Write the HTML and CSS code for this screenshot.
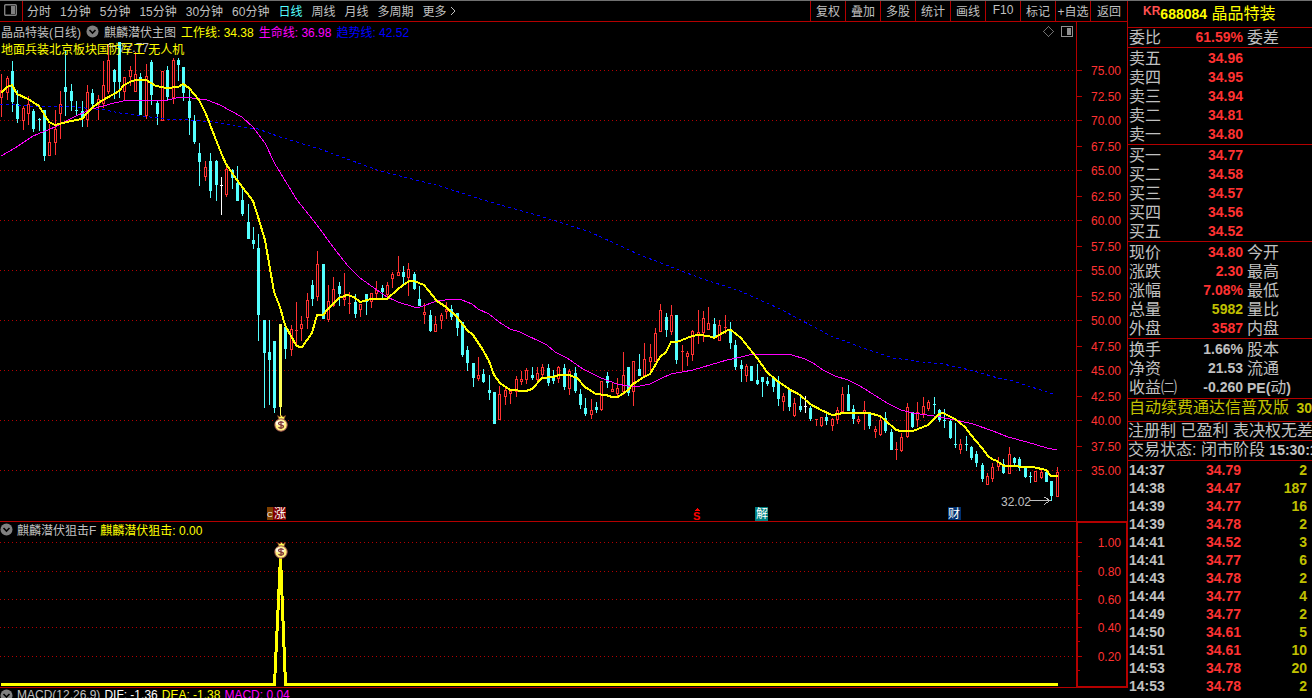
FILE: index.html
```html
<!DOCTYPE html>
<html lang="zh-CN">
<head>
<meta charset="utf-8">
<title>晶品特装 688084</title>
<link rel="stylesheet" href="styles.css">
</head>
<body>
<div class="terminal">
  <main class="charts">
    <header class="toolbar">
      <button class="layout-btn" aria-label="布局">
        <svg width="13" height="12" viewBox="0 0 13 12"><rect x=".7" y=".7" width="11.600" height="10.600" rx="1" fill="none" stroke="#808080" stroke-width="1.400"/><rect x="7" y="2" width="4" height="8" fill="#808080"/></svg>
      </button>
      <nav class="periods">
        <button>分时</button><button>1分钟</button><button>5分钟</button><button>15分钟</button><button>30分钟</button><button>60分钟</button><button class="active">日线</button><button>周线</button><button>月线</button><button>多周期</button><button>更多 <svg width="7" height="10" viewBox="0 0 7 10"><path d="M1 1l4 4-4 4" fill="none" stroke="#c0c0c0"/></svg></button>
      </nav>
      <nav class="tools">
        <button>复权</button><button>叠加</button><button>多股</button><button>统计</button><button>画线</button><button>F10</button><button>标记</button><button>+自选</button><button>返回</button>
      </nav>
    </header>

    <section class="pane">
      <div class="legend">
        <span>晶品特装(日线)</span>
        <svg class="chevron" width="13" height="13" viewBox="0 0 13 13"><circle cx="6.5" cy="6.5" r="6" fill="#808080"/><path d="M3.5 5l3 3 3-3" fill="none" stroke="#000" stroke-width="1.6"/></svg>
        <span>麒麟潜伏主图</span>
        <span class="yellow">工作线: 34.38</span>
        <span class="magenta">生命线: 36.98</span>
        <span class="blue">趋势线: 42.52</span>
      </div>
      <p class="tags">地面兵装北京板块国防军工 无人机</p>
      <svg class="plot" viewBox="0 22 1128 500">
        <g id="priceGrid"></g>
        <path class="frame" d="M1076.5 22V521M1127.5 22V521M0 521.5H1128"/>
        <g class="note">
          <text x="119" y="52">77.77</text>
          <path d="M107 46h9M107 46l4-3"/>
        </g>
        <g id="candles"></g>
        <polyline class="trend" points="0,104 30,106 70,106 85,108 105,110 120,113 150,117 165,119 190,120 215,122 235,126 258,129 280,137 320,149 380,171 440,186 483,200 540,216 590,232 640,255 700,278 740,291 778,308 833,337 842,340 860,347 893,358 923,362 943,364 970,370 998,378 1013,381 1053,394"/>
        <polyline class="life" points="1,156 15,148 33,136 55,127 76,116 92,109 114,103 128,100 168,100 180,97 192,98 207,100 220,105 242,117 253,127 265,143 275,164 297,200 317,225 333,247 348,266 360,278 377,290 387,297 398,302 414,307 420,307 437,301 453,299 462,300 472,304 478,309 489,314 499,322 510,329 520,332 547,345 555,352 567,358 583,369 601,378 617,384 628,386 640,386 650,384 660,379 671,374 693,370 727,360 741,357 753,354 773,354 792,355 805,359 813,363 823,370 835,376 848,380 860,386 868,391 887,403 901,410 913,413 927,415 940,417 960,421 973,424 993,431 1008,437 1027,442 1047,448 1057,450"/>
        <polyline class="work" points="1,93 7,87 12,85 17,94 28,99 39,106 44,114 49,122 55,125 63,123 71,121 82,119 87,113 92,108 98,103 103,100 114,94 119,91 124,85 130,82 135,80 146,80 156,86 167,88 178,87 183,84 189,88 199,100 206,114 216,140 222,155 226,164 237,180 253,201 259,220 265,240 269,263 274,292 280,307 285,325 291,336 296,345 299,347 302,347 312,333 317,315 323,315 328,309 339,298 347,295 354,297 360,302 371,299 387,299 398,289 409,281 414,281 424,285 437,301 446,307 457,317 467,330 473,335 483,350 489,361 494,375 500,383 510,390 526,391 532,389 542,378 553,377 559,375 569,375 577,378 585,387 596,394 606,395 612,397 618,397 628,390 633,384 644,377 650,374 660,357 666,352 671,342 677,342 692,336 698,335 709,336 714,338 719,335 728,330 731,330 741,338 757,358 767,372 776,380 789,389 800,395 810,404 821,410 832,415 839,414 842,413 869,413 880,416 885,420 896,430 901,431 913,431 923,427 928,425 939,414 943,413 955,419 965,427 971,435 982,448 988,456 992,459 997,461 1004,466 1033,467 1046,470 1051,476 1058,476"/>
        <g class="note">
          <text x="1001" y="506">32.02</text>
          <path d="M1030 500.5h20M1044 497l6 3.5-6 4"/>
        </g>
        <g class="marks">
          <rect x="267" y="507" width="6" height="13" fill="#804000"/><text x="267" y="517" class="small">C</text>
          <rect x="273" y="507" width="13" height="13" fill="#800000"/><text x="274" y="518">涨</text>
          <text x="693" y="520" class="s-mark">S</text><path d="M697 508l3 3h-6z" fill="#ff0000"/>
          <rect x="755" y="507" width="13" height="14" fill="#008080"/><text x="756" y="518">解</text>
          <rect x="948" y="507" width="13" height="13" fill="#003070"/><text x="948" y="518">财</text>
        </g>
        <g class="bag" transform="translate(281 425)">
          <path d="M-3.500-9.500l2.500 1.500 1.500-2 1.500 2 2.500-1.500-1.500 4h-5z" fill="#ffff54" stroke="#803020" stroke-width=".7"/>
          <circle r="6.200" fill="#fff080" stroke="#a05050"/><ellipse cx="-1" cy="-2" rx="4.500" ry="2.500" fill="#fffbe0"/>
          <path d="M2.500-2.200c-1.200-1.600-5-1.200-5 .7 0 1.900 5 1.100 5 3 0 1.900-3.800 2.300-5 .7M0-4V4" fill="none" stroke="#803838" stroke-width="1.300"/>
        </g>
        <path d="M1043.500 31.500l5-5 5 5-5 5z" fill="none" stroke="#707070"/>
        <rect x="1061.500" y="26.500" width="11" height="10" rx="1" fill="none" stroke="#909090"/><rect x="1067" y="28" width="4" height="7" fill="#909090"/>
      </svg>
    </section>

    <section class="pane">
      <div class="legend compact">
        <svg class="chevron" width="13" height="13" viewBox="0 0 13 13"><circle cx="6.5" cy="6.5" r="6" fill="#808080"/><path d="M3.500 5l3 3 3-3" fill="none" stroke="#000" stroke-width="1.600"/></svg>
        <span>麒麟潜伏狙击F</span>
        <span class="yellow">麒麟潜伏狙击: 0.00</span>
      </div>
      <svg class="plot" viewBox="0 522 1128 166">
        <g id="signalGrid"></g>
        <path class="frame" d="M0 687.500H1077"/>
        <path d="M1077 522H1127V686.500H1077z" fill="none" stroke="#b40000" stroke-width="2"/>
        <polyline class="signal" points="1,684.500 274.500,684.500 280.500,557 285.500,684.500 1058,684.500"/>
        <g class="bag" transform="translate(281 552)">
          <path d="M-3.500-9.500l2.500 1.500 1.500-2 1.500 2 2.500-1.500-1.500 4h-5z" fill="#ffff54" stroke="#803020" stroke-width=".7"/>
          <circle r="6.200" fill="#fff080" stroke="#a05050"/><ellipse cx="-1" cy="-2" rx="4.500" ry="2.500" fill="#fffbe0"/>
          <path d="M2.500-2.200c-1.200-1.600-5-1.200-5 .7 0 1.900 5 1.100 5 3 0 1.900-3.800 2.300-5 .7M0-4V4" fill="none" stroke="#803838" stroke-width="1.300"/>
        </g>
      </svg>
    </section>

    <section class="pane">
      <div class="legend compact">
        <svg class="chevron" width="13" height="13" viewBox="0 0 13 13"><circle cx="6.5" cy="6.5" r="6" fill="#808080"/><path d="M3.500 5l3 3 3-3" fill="none" stroke="#000" stroke-width="1.600"/></svg>
        <span>MACD(12,26,9)</span>
        <span class="white">DIF: -1.36</span>
        <span class="yellow">DEA: -1.38</span>
        <span class="magenta">MACD: 0.04</span>
      </div>
    </section>
  </main>

  <aside class="quote">
    <h1 class="title"><sup>KR</sup><b>688084</b> 晶品特装</h1>
    <table class="rows ratio">
      <tr><th>委比</th><td>61.59%</td><th>委差</th></tr>
    </table>
    <table class="rows">
      <tr><th>卖五</th><td>34.96</td><th></th></tr>
      <tr><th>卖四</th><td>34.95</td><th></th></tr>
      <tr><th>卖三</th><td>34.94</td><th></th></tr>
      <tr><th>卖二</th><td>34.81</td><th></th></tr>
      <tr><th>卖一</th><td>34.80</td><th></th></tr>
    </table>
    <table class="rows">
      <tr><th>买一</th><td>34.77</td><th></th></tr>
      <tr><th>买二</th><td>34.58</td><th></th></tr>
      <tr><th>买三</th><td>34.57</td><th></th></tr>
      <tr><th>买四</th><td>34.56</td><th></th></tr>
      <tr><th>买五</th><td>34.52</td><th></th></tr>
    </table>
    <table class="rows">
      <tr><th>现价</th><td>34.80</td><th>今开</th></tr>
      <tr><th>涨跌</th><td>2.30</td><th>最高</th></tr>
      <tr><th>涨幅</th><td>7.08%</td><th>最低</th></tr>
      <tr><th>总量</th><td class="olive">5982</td><th>量比</th></tr>
      <tr><th>外盘</th><td>3587</td><th>内盘</th></tr>
    </table>
    <table class="rows plain">
      <tr><th>换手</th><td>1.66%</td><th>股本</th></tr>
      <tr><th>净资</th><td>21.53</th><th>流通</th></tr>
      <tr><th>收益㈡</th><td>-0.260</td><th><b>PE(</b>动<b>)</b></th></tr>
    </table>
    <p class="line promo">自动续费通达信普及版 <b>30</b></p>
    <p class="line info">注册制 已盈利 表决权无差</p>
    <p class="line state">交易状态: 闭市阶段 <b>15:30:1</b></p>
    <table class="ticks">
      <tr><th>14:37</th><td>34.79</td><td>2</td></tr>
      <tr><th>14:38</th><td>34.47</td><td>187</td></tr>
      <tr><th>14:39</th><td>34.77</td><td>16</td></tr>
      <tr><th>14:39</th><td>34.78</td><td>2</td></tr>
      <tr><th>14:41</th><td>34.52</td><td>3</td></tr>
      <tr><th>14:41</th><td>34.77</td><td>6</td></tr>
      <tr><th>14:43</th><td>34.78</td><td>2</td></tr>
      <tr><th>14:44</th><td>34.77</td><td>4</td></tr>
      <tr><th>14:49</th><td>34.77</td><td>2</td></tr>
      <tr><th>14:50</th><td>34.61</td><td>5</td></tr>
      <tr><th>14:51</th><td>34.61</td><td>10</td></tr>
      <tr><th>14:53</th><td>34.78</td><td>20</td></tr>
      <tr><th>14:53</th><td>34.78</td><td>2</td></tr>
    </table>
  </aside>
</div>
<script src="chart.js"></script>
</body>
</html>
```
FILE: styles.css
```css
* { box-sizing: border-box; }

body {
  margin: 0;
  background: #000;
  color: #c0c0c0;
  font-family: "Liberation Sans", "Noto Sans CJK SC", sans-serif;
  font-size: 12px;
  overflow: hidden;
}

.terminal {
  display: grid;
  grid-template-columns: minmax(0, 1fr) 184px;
  height: 100vh;
  overflow: hidden;
  border-top: 1px solid #707070;
}

.charts { overflow: hidden; }

button {
  margin: 0;
  padding: 0 0 2px;
  border: 0;
  background: none;
  color: inherit;
  font: inherit;
  white-space: nowrap;
}

.toolbar {
  display: flex;
  height: 21px;
  border-bottom: 1px solid #b40000;
}

.layout-btn {
  width: 23px;
  padding-right: 2px;
  border-right: 1px solid #b40000;
  line-height: 0;
}

.periods {
  display: flex;
  gap: 9px;
  padding-left: 4px;
}

.periods .active { color: #54ffff; }

.tools {
  display: flex;
  margin-left: auto;
}

.tools button {
  width: 35px;
  border-left: 1px solid #b40000;
}

.tools button:last-child {
  width: 38px;
  border-right: 1px solid #b40000;
}

.pane { position: relative; }

.legend {
  position: absolute;
  top: 0;
  left: 1px;
  display: flex;
  align-items: center;
  gap: 5px;
  height: 18px;
  white-space: nowrap;
}

.legend.compact {
  left: 0;
  gap: 4px;
  height: 14px;
}

.tags {
  position: absolute;
  top: 19px;
  left: 1px;
  margin: 0;
  line-height: 18px;
  color: #ffff00;
}

.yellow { color: #ffff00; }
.magenta { color: #ff00ff; }
.blue { color: #0000ff; }
.white { color: #ffffff; }

.plot {
  display: block;
  width: 100%;
  height: auto;
  shape-rendering: crispEdges;
}

.bag { shape-rendering: auto; }
.chevron { display: block; }

.frame { fill: none; stroke: #b40000; }
.grid { stroke: #b40000; stroke-dasharray: 1 3; }
.axis { fill: #ff3232; font-size: 12px; text-anchor: end; }
.up { fill: #000; stroke: #ff3232; }
.down { fill: #54ffff; stroke: #54ffff; }
.flat { fill: #fff; stroke: #fff; }
.hot { fill: #ffff54; stroke: #ffff54; }
.trend { fill: none; stroke: #0000ff; stroke-dasharray: 3 3; }
.life { fill: none; stroke: #ff00ff; }
.work { fill: none; stroke: #ffff00; stroke-width: 2; }
.signal { fill: none; stroke: #ffff00; stroke-width: 3; }
.note { fill: #c0c0c0; font-size: 12px; }
.note path { fill: none; stroke: #c0c0c0; }
.marks { fill: #fff; font-size: 12px; }
.marks .small { font-size: 8px; }
.marks .s-mark { fill: #ff0000; font-size: 11px; font-weight: 700; }

.quote {
  overflow: hidden;
  font-size: 16px;
  white-space: nowrap;
}

.quote b, .quote td { font-size: 14px; font-weight: 700; }
.quote b { line-height: 1; }

.title {
  height: 27px;
  margin: 0;
  padding-left: 15px;
  border-bottom: 1px solid #b40000;
  color: #ffff00;
  font-size: 16px;
  font-weight: 400;
  line-height: 26px;
}

.title sup {
  color: #ff5050;
  font-size: 12px;
  font-weight: 700;
  line-height: 0;
  vertical-align: 4px;
}

table { border-collapse: collapse; table-layout: fixed; }

th { font-weight: 400; text-align: left; }
th, td { padding: 0; line-height: 19px; height: 19px; }

.rows {
  display: block;
  padding-top: 1px;
  border-bottom: 1px solid #b40000;
}

.ratio { padding-top: 0; }

.rows th:first-child { width: 56px; padding-left: 1px; }
.rows td { width: 59px; text-align: right; color: #ff3232; }
.rows th:last-child { padding-left: 4px; }
.rows .olive { color: #c0c000; }
.plain td { color: #c0c0c0; }
.plain { padding-bottom: 1px; }

.line {
  height: 20px;
  margin: 0;
  border-bottom: 1px solid #b40000;
  line-height: 18px;
}

.promo { height: 23px; padding-left: 1px; color: #c0c000; }
.promo b { padding-left: 3px; }
.info { height: 19px; }

.ticks { width: 179px; }
.ticks th { width: 56px; padding-left: 1px; font-size: 14px; font-weight: 700; }
.ticks td { text-align: right; color: #c0c000; }
.ticks td:nth-child(2) { width: 57px; color: #ff3232; }
.ticks th, .ticks td { height: 18px; line-height: 18px; }
```
FILE: chart.js
```js
const NS = "http://www.w3.org/2000/svg";

function add(parent, tag, attrs, text) {
  const el = document.createElementNS(NS, tag);
  for (const key in attrs) el.setAttribute(key, attrs[key]);
  if (text) el.textContent = text;
  parent.appendChild(el);
}

// x, high, body top, body bottom, low, kind (r rising, c falling, w flat, y signal)
const candles = `
1 74 90 97 116 r;7 76 78 92 99 r;12 61 71 101 111 c;17 90 104 118 122 c;23 106 108 120 129 r;28 96 104 113 124 r;
33 109 111 128 131 c;39 118 119 120 130 c;44 110 110 155 160 c;49 124 142 155 155 r;55 110 129 142 154 r;60 91 104 113 138 r;
65 50 87 91 115 c;71 84 91 100 110 c;76 101 110 111 115 c;82 101 111 118 126 c;87 85 92 119 126 r;92 89 93 103 107 c;
98 95 99 104 119 r;103 61 85 103 107 r;108 45 60 91 93 r;114 69 70 81 98 c;119 42 42 81 97 c;124 77 77 91 100 r;
130 66 70 76 85 r;135 52 74 91 91 r;140 73 77 114 114 c;146 64 76 115 118 r;151 60 62 94 104 c;157 101 103 113 124 c;
162 71 71 120 120 r;167 66 70 96 100 c;173 58 60 97 103 r;178 58 60 64 80 c;183 67 67 92 100 c;189 89 101 117 134 c;
194 115 121 141 143 c;199 143 153 161 185 c;205 161 167 176 180 r;210 153 161 190 197 c;216 160 161 184 200 c;221 177 185 186 214 w;
226 165 169 194 196 r;232 169 170 177 188 c;237 166 183 200 200 c;242 187 200 213 215 c;248 204 222 238 238 c;253 227 240 243 248 c;
258 234 248 314 340 c;264 320 320 352 407 c;269 320 352 359 404 c;274 341 341 407 412 c;280 324 324 406 416 y;285 324 327 348 358 c;
291 325 329 349 355 r;296 302 330 331 345 r;301 316 324 328 340 r;307 293 300 317 328 r;312 280 285 298 305 c;317 251 264 296 300 r;
323 264 264 318 318 c;328 285 301 319 321 r;333 277 289 305 306 r;339 282 286 293 305 c;344 273 297 299 305 r;349 292 303 304 313 r;
355 294 302 313 317 c;360 304 304 309 316 r;366 294 294 301 314 c;371 293 293 301 307 r;376 281 290 293 298 r;382 285 288 291 298 c;
387 282 285 294 298 r;392 272 274 278 287 r;398 256 272 275 275 r;403 266 272 276 284 c;408 263 269 277 295 r;414 272 274 288 289 c;
419 286 299 305 305 c;424 303 312 314 323 r;430 310 315 330 331 c;435 316 324 331 331 r;441 313 315 320 328 r;446 302 309 311 318 r;
451 305 309 316 319 c;457 313 313 327 335 c;462 322 322 354 356 c;467 346 350 362 370 c;473 363 363 377 386 c;478 357 375 378 380 r;
483 369 374 381 382 c;489 375 390 392 399 c;494 392 392 423 423 c;499 386 394 419 419 r;505 387 390 396 404 r;510 389 391 393 403 r;
516 376 379 391 396 r;521 371 379 381 384 r;526 368 370 379 383 r;532 367 375 377 379 c;537 367 373 379 381 r;542 364 367 374 378 r;
548 364 368 382 385 c;553 370 378 380 383 c;558 366 367 378 382 r;564 364 368 386 389 c;569 369 371 388 394 r;575 367 373 390 392 c;
580 389 394 404 408 c;585 398 408 413 415 c;591 399 410 414 418 r;596 402 407 409 412 c;601 381 381 409 410 r;607 372 376 382 387 c;
612 382 389 391 391 r;617 378 388 393 395 r;623 352 375 391 394 r;628 367 367 392 395 c;633 361 361 391 405 r;639 354 369 375 375 c;
644 343 359 375 375 r;650 344 357 361 370 r;655 328 333 361 361 r;660 304 310 331 331 r;666 313 317 329 336 c;671 305 315 331 334 r;
676 315 315 359 363 c;682 345 351 352 370 r;687 351 353 356 365 r;692 330 331 354 360 r;698 310 332 335 343 r;703 311 318 332 341 r;
708 307 323 329 329 r;714 318 324 337 337 c;719 320 325 340 340 r;725 315 327 328 333 r;730 322 330 342 348 c;735 340 345 366 369 c;
741 360 365 368 381 c;746 364 366 375 381 r;751 366 366 380 380 c;757 364 380 383 384 c;762 377 377 381 396 c;767 377 381 383 385 c;
773 376 378 386 391 c;778 376 381 398 405 c;783 393 396 401 410 r;789 388 390 406 410 c;794 398 403 415 416 r;800 397 406 409 411 c;
805 396 406 407 412 w;810 406 408 418 420 c;816 419 419 420 425 r;821 417 417 425 426 r;826 413 417 420 424 c;832 418 419 425 430 r;
837 407 410 419 423 r;842 387 394 411 412 r;848 385 394 410 410 c;853 405 409 418 423 c;858 416 419 421 423 r;864 401 410 413 429 r;
869 412 412 425 428 c;875 426 429 431 437 r;880 418 420 434 435 r;885 412 418 430 432 c;891 429 432 449 449 c;896 442 449 450 459 r;
901 433 437 450 451 r;907 403 407 436 437 r;912 412 412 426 427 c;917 402 412 419 426 r;923 397 406 413 417 r;928 400 402 408 410 r;
934 397 404 405 413 c;939 409 410 419 421 c;944 409 420 421 427 c;950 419 421 437 438 c;955 423 444 445 447 c;960 439 444 449 453 r;
966 436 444 445 450 c;971 446 447 457 459 c;976 451 454 462 466 c;982 463 465 478 481 c;987 473 476 484 484 r;992 463 467 478 481 r;
998 457 462 466 470 r;1003 459 464 472 473 c;1009 447 454 473 473 r;1014 457 458 462 464 c;1019 457 459 467 470 c;1025 467 467 476 477 c;
1030 472 476 477 482 c;1035 471 471 481 481 r;1041 470 472 477 478 r;1046 470 472 481 481 c;1051 481 481 495 500 c;1057 467 472 496 496 r`;

const kinds = { r: "up", c: "down", w: "flat", y: "hot" };
const layer = document.getElementById("candles");
for (const row of candles.split(";")) {
  const [xs, ...rest] = row.trim().split(" ");
  const x = Number(xs);
  const kind = rest.pop();
  const [high, top, bottom, low] = rest.map(Number);
  const g = { class: kinds[kind] };
  add(layer, "path", { ...g, d: `M${x + .5} ${high}V${low + 1}` });
  if (bottom - top > 1) {
    add(layer, "rect", { ...g, x: x - .5, y: top + .5, width: 2, height: bottom - top });
  } else {
    add(layer, "path", { ...g, d: `M${x - 1} ${top + .5}h3` });
  }
}

function level(group, y, label, line) {
  if (line) add(group, "path", { class: "grid", d: `M0 ${y + .5}H1076` });
  add(group, "path", { class: "frame", d: `M1077 ${y + .5}h5` });
  add(group, "text", { class: "axis", x: 1121, y: y + 5 }, label);
}

const priceGrid = document.getElementById("priceGrid");
for (let i = 0; i <= 16; i++) {
  level(priceGrid, 70 + i * 25 + (i % 2), (75 - i * 2.5).toFixed(2), i % 2 === 0);
}

const signalGrid = document.getElementById("signalGrid");
[542, 571, 599, 627, 656].forEach((y, i) => {
  level(signalGrid, y, (1 - i * .2).toFixed(2), true);
  add(signalGrid, "path", { class: "frame", d: `M1078 ${y + 14.5}h2` });
});
```
